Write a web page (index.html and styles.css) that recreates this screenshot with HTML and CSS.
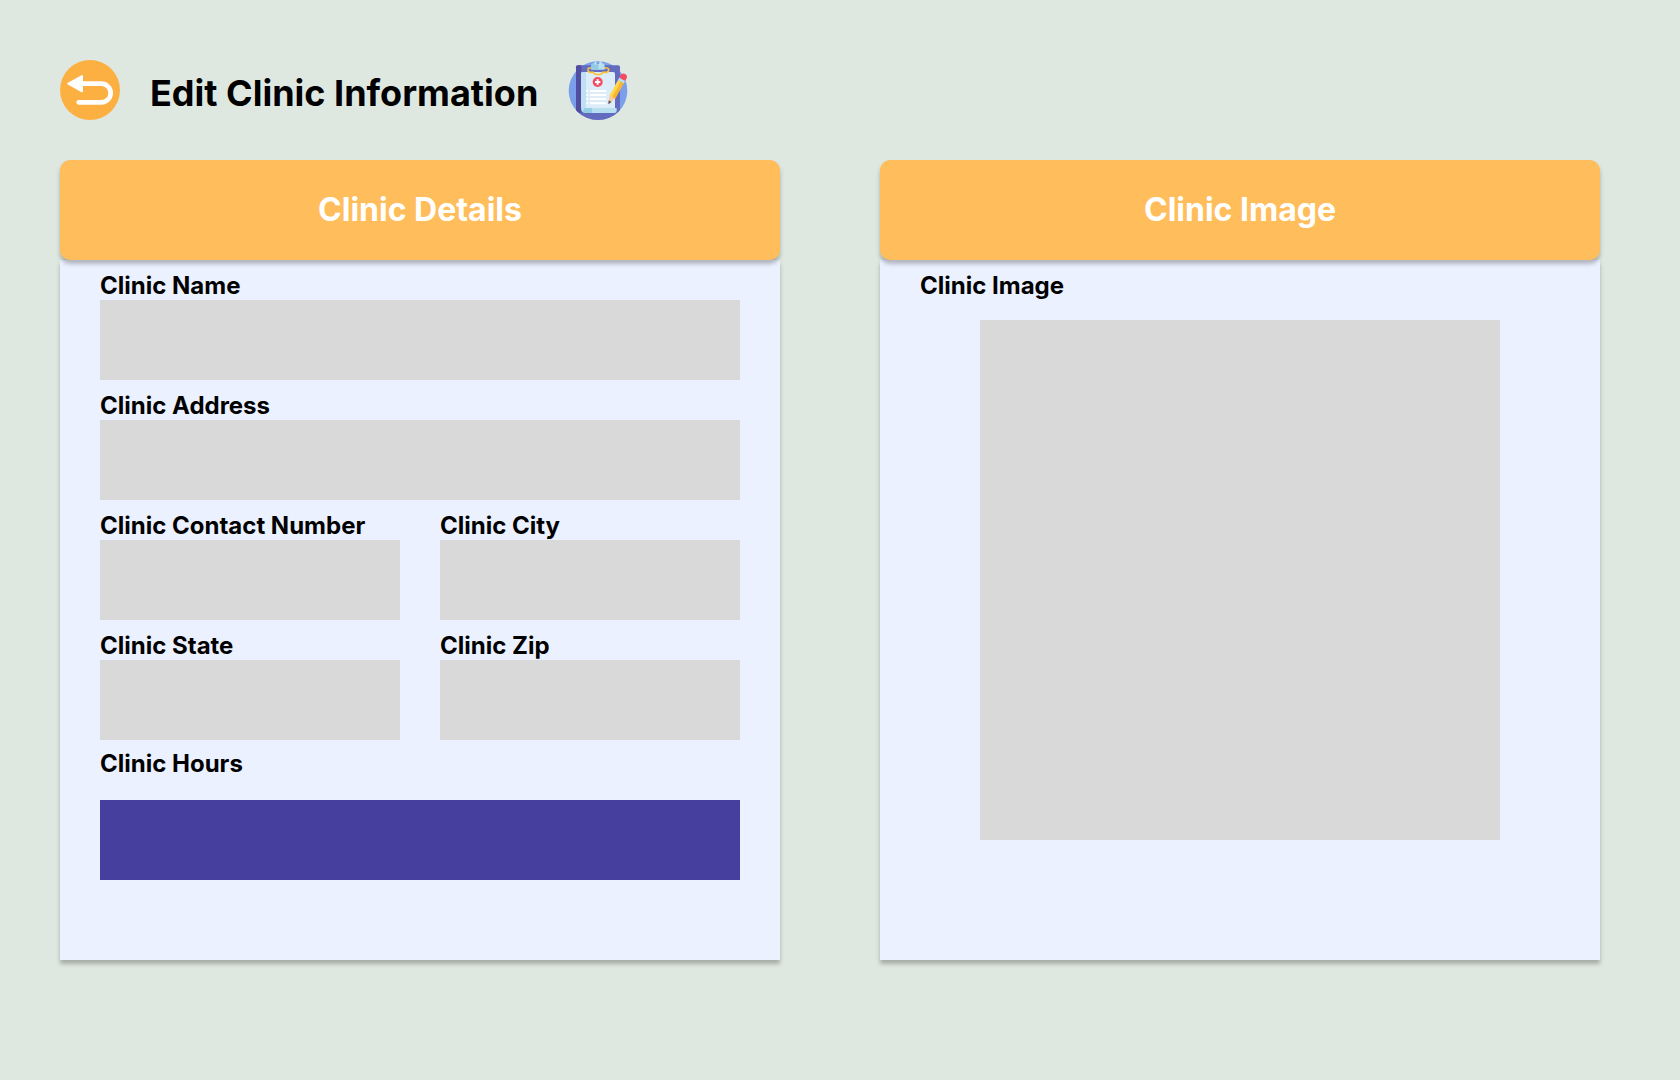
FILE: index.html
```html
<!DOCTYPE html>
<html lang="en">
<head>
  <meta charset="utf-8">
  <meta name="viewport" content="width=device-width, initial-scale=1">
  <title>Edit Clinic Information</title>
  <link rel="stylesheet" href="styles.css">
</head>
<body>
  <header class="page-header">
    <button class="back" type="button" aria-label="Back">
      <svg class="icon" viewBox="0 0 180 180" aria-hidden="true">
        <circle cx="90" cy="90" r="90" fill="#fdb042"/>
        <path d="M64 71H124a28 28 0 0 1 0 56H56" fill="none" stroke="#fff" stroke-width="14" stroke-linecap="round"/>
        <path d="M25 71L66 48V94Z" fill="#fff" stroke="#fff" stroke-width="6" stroke-linejoin="round"/>
      </svg>
    </button>
    <h1 class="page-title">Edit Clinic Information</h1>
    <svg class="icon" viewBox="0 0 180 180" aria-hidden="true">
      <defs>
        <clipPath id="board"><circle cx="90" cy="92" r="88"/><path d="M20 0H160V120H20Z"/></clipPath>
        <linearGradient id="pencil" x1="0" x2="1"><stop offset="0" stop-color="#ffdb57"/><stop offset=".5" stop-color="#ffd04a"/><stop offset=".5" stop-color="#f9b52c"/><stop offset="1" stop-color="#f9b52c"/></linearGradient>
      </defs>
      <circle cx="90" cy="92" r="88" fill="#7b9fea"/>
      <g clip-path="url(#board)">
        <path d="M30 16H150a6 6 0 0 1 6 6V180H24V22a6 6 0 0 1 6-6Z" fill="#626bbd"/>
        <path d="M30 16H40V158H24V22a6 6 0 0 1 6-6Z" fill="#514da1"/>
      </g>
      <path d="M39 41a5 5 0 0 1 5-5H136a5 5 0 0 1 5 5V150H52a13 13 0 0 1-13-13Z" fill="#dcedf9"/>
      <path d="M39 41a5 5 0 0 1 5-5h10V151Q39 151 39 138Z" fill="#bfe0f2"/>
      <path d="M51 144H146V152q0 7-7 7H52q-13-2-13-15Z" fill="#b8dff0"/>
      <path d="M50 144H72V159H50q-9-6 0-15Z" fill="#93cee5"/>
      <path d="M62 24h55q5 0 5 6t-7 7h-11q-2 7-14 7t-14-7H66q-6-1-6-7t2-6Z" fill="none" stroke="#fcc23d" stroke-width="5"/>
      <path d="M70 17a7 7 0 0 1 7-7h2V4h6v8h10V4h6v6h2a7 7 0 0 1 7 7V29H70Z" fill="#b8dff0"/>
      <path d="M70 17a7 7 0 0 1 7-7h2V4h6v8h6V29H70Z" fill="#91cbe5"/>
      <path d="M83 6V14M96 6V14" stroke="#dcedf9" stroke-width="3"/>
      <circle cx="89" cy="66" r="15" fill="#f54b60"/>
      <path d="M89 58V74M81 66H97" stroke="#fff" stroke-width="6"/>
      <path d="M55 93H61M66 93H115M55 105H61M66 105H115M55 117H61M66 117H115M55 130H61M66 130H115" stroke="#fff" stroke-width="6"/>
      <g transform="translate(121 133) rotate(29)">
        <path d="M0 0L-10-26H10Z" fill="#f7caa0"/>
        <path d="M0 0L-5-11H5Z" fill="#555361"/>
        <path d="M-10-79H10V-25H-10Z" fill="url(#pencil)"/>
        <path d="M-10-87H10V-78H-10Z" fill="#b8dff0"/>
        <path d="M-10-86V-94q0-10 10-10t10 10v8Z" fill="#f54b60"/>
      </g>
    </svg>
  </header>

  <main class="panels">
    <section class="panel" aria-labelledby="details-title">
      <h2 class="panel-title" id="details-title">Clinic Details</h2>
      <form class="panel-body">
        <div class="fields">
          <div class="field wide">
            <label class="label" for="name">Clinic Name</label>
            <input class="input" id="name" type="text">
          </div>
          <div class="field wide">
            <label class="label" for="address">Clinic Address</label>
            <input class="input" id="address" type="text">
          </div>
          <div class="field">
            <label class="label" for="contact">Clinic Contact Number</label>
            <input class="input" id="contact" type="tel">
          </div>
          <div class="field">
            <label class="label" for="city">Clinic City</label>
            <input class="input" id="city" type="text">
          </div>
          <div class="field">
            <label class="label" for="state">Clinic State</label>
            <input class="input" id="state" type="text">
          </div>
          <div class="field">
            <label class="label" for="zip">Clinic Zip</label>
            <input class="input" id="zip" type="text">
          </div>
        </div>
        <div class="hours">
          <label class="label" for="hours">Clinic Hours</label>
          <button class="hours-button" id="hours" type="button"></button>
        </div>
      </form>
    </section>

    <section class="panel" aria-labelledby="image-title">
      <h2 class="panel-title" id="image-title">Clinic Image</h2>
      <div class="panel-body">
        <h3 class="label" id="image-label">Clinic Image</h3>
        <div class="preview" role="img" aria-labelledby="image-label"></div>
      </div>
    </section>
  </main>
</body>
</html>
```
FILE: styles.css
```css
* {
  box-sizing: border-box;
}

body {
  margin: 0;
  padding: 60px 80px 120px 60px;
  background: #dee8e0;
  color: #000;
  font-family: Inter, "Liberation Sans", sans-serif;
}

h1,
h2,
h3 {
  margin: 0;
}

.page-header {
  display: flex;
  align-items: center;
  gap: 30px;
}

.back {
  padding: 0;
  border: 0;
  border-radius: 50%;
  background: none;
  cursor: pointer;
}

.icon {
  display: block;
  flex: none;
  width: 60px;
  height: 60px;
}

.page-title {
  padding-top: 6px;
  font-size: 36px;
  font-weight: 700;
  line-height: 44px;
}

.panels {
  display: grid;
  grid-template-columns: repeat(2, minmax(0, 1fr));
  gap: 100px;
  margin-top: 40px;
}

.panel {
  display: flex;
  flex-direction: column;
}

.panel-title {
  z-index: 1;
  padding: 30px;
  border-radius: 10px;
  background: #ffbd5c;
  box-shadow: 0 4px 4px rgba(0, 0, 0, 0.25);
  color: #fff;
  font-size: 32px;
  font-weight: 700;
  line-height: 40px;
  text-align: center;
}

.panel-body {
  flex: 1;
  padding: 12px 40px 80px;
  background: #ebf1ff;
  box-shadow: 0 4px 4px rgba(0, 0, 0, 0.25);
}

.fields {
  display: grid;
  grid-template-columns: repeat(2, minmax(0, 1fr));
  gap: 12px 40px;
}

.wide {
  grid-column: 1 / -1;
}

.label {
  display: block;
  font-size: 24px;
  font-weight: 700;
  line-height: 28px;
}

.input {
  display: block;
  width: 100%;
  height: 80px;
  padding: 0 20px;
  border: 0;
  border-radius: 0;
  background: #d9d9d9;
  font: inherit;
  font-size: 24px;
}

.hours {
  display: grid;
  gap: 22px;
  margin-top: 10px;
}

.hours-button {
  height: 80px;
  border: 0;
  background: #463f9e;
  cursor: pointer;
}

.preview {
  aspect-ratio: 1;
  margin: 20px 60px 0;
  background: #d9d9d9;
}
```
